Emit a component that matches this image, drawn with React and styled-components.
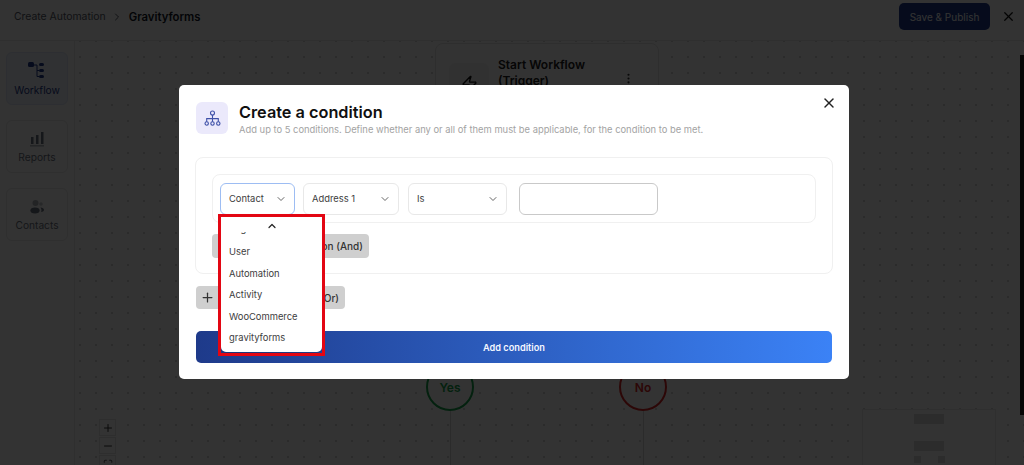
import React from 'react'
import styled, { createGlobalStyle } from 'styled-components'
import { ChevronDown, ChevronRight, ChevronUp, EllipsisVertical, Maximize, Minus, Plus, X, Zap } from 'lucide-react'

const GlobalStyle = createGlobalStyle`
  html, body { margin: 0; padding: 0; height: 100%; overflow: hidden; }
  body { font-family: Inter, "Liberation Sans", sans-serif; background: #fff; }
  * { box-sizing: border-box; }
`

const Page = styled.div`
  position: relative;
  width: 1024px;
  height: 465px;
  display: flex;
  flex-direction: column;
  overflow: hidden;
  background: #fff;
`

const TopBar = styled.header`
  height: 41px;
  flex: none;
  display: flex;
  align-items: center;
  padding: 0 8px 7px 14px;
  border-bottom: 1px solid #e8e8e8;
`

const Crumb = styled.span`
  font-size: 10.4px;
  color: #555b66;
`

const CrumbCurrent = styled.span`
  font-size: 11.3px;
  font-weight: 600;
  color: #111827;
`

const CrumbArrow = styled(ChevronRight)`
  margin: 0 6px 0 5px;
  color: #555b66;
`

const SaveButton = styled.button`
  margin-left: auto;
  width: 91px;
  height: 27px;
  border: 0;
  border-radius: 5px;
  background: #1e3a8a;
  color: #fff;
  font: 400 10px Inter, sans-serif;
`

const CloseTop = styled(X)`
  margin-left: 11px;
  color: #111;
`

const Body = styled.div`
  flex: 1;
  display: flex;
  min-height: 0;
`

const SideNav = styled.nav`
  width: 75px;
  flex: none;
  display: flex;
  flex-direction: column;
  gap: 15px;
  padding: 11px 6px;
  border-right: 1px solid #e8e8e8;
`

const NavCard = styled.div`
  height: 53px;
  display: flex;
  flex-direction: column;
  align-items: center;
  justify-content: center;
  gap: 4px;
  border: 1px solid ${p => (p.$active ? '#dfe7f7' : '#e8e8e8')};
  border-radius: 6px;
  background: ${p => (p.$active ? '#eff4ff' : '#fff')};
  color: ${p => (p.$active ? '#1e3a8a' : '#6b7280')};
  font-size: 10.2px;
`

const Canvas = styled.main`
  position: relative;
  flex: 1;
  background-image: radial-gradient(circle, #d4d4d4 0.8px, transparent 1px);
  background-size: 16px 16px;
  background-position: -3px 8px;
`

const StartNode = styled.div`
  position: absolute;
  left: 360px;
  top: 2px;
  width: 224px;
  height: 110px;
  display: flex;
  gap: 9px;
  padding: 19px 13px;
  border: 1px solid #e5e5e5;
  border-radius: 8px;
  background: #fff;
`

const NodeIcon = styled.div`
  width: 40px;
  height: 40px;
  flex: none;
  display: flex;
  align-items: center;
  justify-content: center;
  border-radius: 6px;
  background: #f5f5f5;
  color: #111;
`

const NodeTitle = styled.div`
  width: 110px;
  font-size: 12px;
  line-height: 16px;
  font-weight: 600;
  color: #222;
  margin-top: -6px;
`

const NodeMenu = styled(EllipsisVertical)`
  position: absolute;
  right: 23px;
  top: 28px;
  color: #333;
`

const Branch = styled.div`
  position: absolute;
  left: ${p => p.$left}px;
  top: 322px;
  width: 48px;
  height: 48px;
  display: flex;
  align-items: center;
  justify-content: center;
  border: 2px solid ${p => p.$color};
  border-radius: 50%;
  background: #fff;
  color: ${p => p.$color};
  font-size: 12px;
  font-weight: 600;

  &::after {
    content: '';
    position: absolute;
    left: 50%;
    top: 46px;
    width: 1px;
    height: 60px;
    background: #d4d4d4;
  }
`

const ZoomControls = styled.div`
  position: absolute;
  left: 24px;
  top: 378px;
  width: 17px;
  display: flex;
  flex-direction: column;
  gap: 1px;
`

const ZoomButton = styled.div`
  height: 17px;
  display: flex;
  align-items: center;
  justify-content: center;
  border: 1px solid #e5e5e5;
  background: #fff;
  color: #333;
`

const MiniMap = styled.div`
  position: absolute;
  left: 787px;
  top: 368px;
  width: 134px;
  height: 70px;
  display: flex;
  flex-direction: column;
  align-items: center;
  gap: 17px;
  padding-top: 4px;
  border: 1px solid #e8e8e8;
  background: #fff;
`

const MiniBar = styled.div`
  width: 30px;
  height: 10px;
  background: #dcdcdc;
`

const MiniDots = styled.div`
  width: 31px;
  display: flex;
  justify-content: space-between;
  margin-top: -12px;
`

const MiniDot = styled.div`
  width: 7px;
  height: 7px;
  background: #dcdcdc;
`

const ScrollBar = styled.div`
  position: absolute;
  right: 0;
  top: 14px;
  width: 4px;
  height: 360px;
  background: #222;
`

const Backdrop = styled.div`
  position: absolute;
  inset: 0;
  display: flex;
  align-items: center;
  justify-content: center;
  padding: 0 0 1px 4px;
  background: rgba(0, 0, 0, 0.8);
`

const Modal = styled.section`
  position: relative;
  width: 670px;
  height: 294px;
  padding: 17px 16px 16px;
  border-radius: 5px;
  background: #fff;
`

const ModalClose = styled(X)`
  position: absolute;
  right: 12px;
  top: 10px;
  color: #222;
`

const ModalHeader = styled.div`
  display: flex;
  gap: 11px;
  padding-left: 1px;
`

const ModalIcon = styled.div`
  width: 32px;
  height: 32px;
  flex: none;
  display: flex;
  align-items: center;
  justify-content: center;
  border-radius: 6px;
  background: #ebe9fb;
  color: #3f51a8;
`

const ModalHeading = styled.div`
  display: flex;
  flex-direction: column;
  gap: 1px;
`

const Title = styled.h2`
  margin: 0;
  font-size: 16.3px;
  line-height: 20px;
  font-weight: 600;
  color: #101010;
`

const Subtitle = styled.p`
  margin: 0;
  font-size: 9.4px;
  line-height: 13px;
  color: #a3a3a3;
`

const GroupBox = styled.div`
  margin-top: 21px;
  height: 117px;
  padding: 16px;
  border: 1px solid #f0f0f0;
  border-radius: 8px;
`

const RuleRow = styled.div`
  height: 49px;
  display: flex;
  align-items: center;
  padding: 0 7px;
  border: 1px solid #f0f0f0;
  border-radius: 8px;
`

const SelectWrap = styled.div`
  position: relative;
  width: ${p => p.$width}px;
  margin-right: ${p => p.$gap}px;
  flex: none;
`

const SelectBox = styled.div`
  height: 32px;
  display: flex;
  align-items: center;
  justify-content: space-between;
  padding: 0 7px 0 8px;
  border: 1px solid ${p => (p.$open ? '#9dbdf3' : '#e8e8e8')};
  border-radius: 6px;
  font-size: 9.4px;
  color: #3d3d3d;
`

const SelectChevron = styled(ChevronDown)`
  color: #666;
`

const ValueInput = styled.input`
  width: 139px;
  height: 32px;
  padding: 0 8px;
  border: 1px solid #c9c9c9;
  border-radius: 6px;
  outline: 0;
`

const Dropdown = styled.div`
  position: absolute;
  left: 1px;
  top: 32px;
  width: 101px;
  height: 137px;
  z-index: 2;
  border-radius: 0 0 5px 5px;
  background: #fff;
  box-shadow: 0 1px 3px rgba(0, 0, 0, 0.25);
`

const ScrollUp = styled(ChevronUp)`
  display: block;
  margin: 5px auto 0;
  color: #222;
`

const OptionList = styled.div`
  height: 120px;
  overflow: hidden;
  padding: 0 8px;
`

const Option = styled.div`
  height: 21.5px;
  line-height: 21.5px;
  font-size: 9.4px;
  color: #3d3d3d;
  margin-top: ${p => (p.$clipped ? '-14px' : '0')};
  margin-bottom: ${p => (p.$clipped ? '2px' : '0')};
`

const Highlight = styled.div`
  position: absolute;
  left: -2px;
  top: 31px;
  width: 107px;
  height: 142px;
  z-index: 3;
  border: 3px solid #e30613;
  pointer-events: none;
`

const GreyButton = styled.button`
  width: ${p => p.$width}px;
  height: ${p => p.$height}px;
  display: flex;
  align-items: center;
  justify-content: space-between;
  padding: 0 6px 0 4px;
  border: 0;
  border-radius: 4px;
  background: #cfcfcf;
  color: #333;
  font: 500 10px Inter, sans-serif;
`

const AndButton = styled(GreyButton)`
  margin-top: 11px;
`

const OrButton = styled(GreyButton)`
  margin: 12px 0 0 1px;
`

const AddButton = styled.button`
  display: block;
  width: 636px;
  height: 32px;
  margin: 22px 0 0 1px;
  border: 0;
  border-radius: 5px;
  background: linear-gradient(90deg, #1e3a8a, #3b82f6);
  color: #f4f7ff;
  font: 600 9.2px Inter, sans-serif;
`

const WorkflowIcon = () => (
  <svg width="20" height="18" viewBox="0 0 20 18" fill="currentColor">
    <rect x="1" y="0" width="6" height="5" rx="1.5" />
    <rect x="12" y="1" width="5" height="3" rx="1.5" />
    <rect x="12" y="7" width="5" height="3" rx="1.5" />
    <rect x="12" y="13" width="5" height="3" rx="1.5" />
    <path d="M7 3h3M10 3v11.5h2M10 8.5h2" fill="none" stroke="currentColor" />
  </svg>
)

const ReportsIcon = () => (
  <svg width="16" height="16" viewBox="0 0 16 16" fill="currentColor">
    <rect x="2" y="6" width="2.5" height="7" />
    <rect x="7" y="4" width="2.5" height="9" />
    <rect x="12" y="1" width="2.5" height="12" />
    <rect x="1" y="14.5" width="14" height="0.8" />
  </svg>
)

const ContactsIcon = () => (
  <svg width="16" height="16" viewBox="0 0 16 16" fill="currentColor">
    <circle cx="6.5" cy="4" r="3" opacity="0.55" />
    <ellipse cx="6" cy="11.5" rx="4.6" ry="3" />
    <circle cx="12" cy="5" r="1.8" opacity="0.4" />
    <path d="M11.5 8.5c2 0 3.5 1.2 3.5 2.5s-1.5 2-3 2c.8-1.5.5-3-.5-4.5z" />
  </svg>
)

const HierarchyIcon = () => (
  <svg width="17" height="17" viewBox="0 0 17 17" fill="none" stroke="currentColor" strokeWidth="1.1">
    <circle cx="8.5" cy="3" r="2" />
    <circle cx="2.7" cy="13.5" r="1.7" />
    <circle cx="8.5" cy="13.5" r="1.7" />
    <circle cx="14.3" cy="13.5" r="1.7" />
    <path d="M8.5 5v6.8M2.7 11.8V8.6h11.6v3.2" />
  </svg>
)

const options = ['Segment', 'User', 'Automation', 'Activity', 'WooCommerce', 'gravityforms']

export default function App() {
  return (
    <Page>
      <GlobalStyle />
      <TopBar>
        <Crumb>Create Automation</Crumb>
        <CrumbArrow size={12} />
        <CrumbCurrent>Gravityforms</CrumbCurrent>
        <SaveButton>Save &amp; Publish</SaveButton>
        <CloseTop size={15} />
      </TopBar>
      <Body>
        <SideNav>
          <NavCard $active>
            <WorkflowIcon />
            Workflow
          </NavCard>
          <NavCard>
            <ReportsIcon />
            Reports
          </NavCard>
          <NavCard>
            <ContactsIcon />
            Contacts
          </NavCard>
        </SideNav>
        <Canvas>
          <StartNode>
            <NodeIcon>
              <Zap size={17} />
            </NodeIcon>
            <NodeTitle>Start Workflow (Trigger)</NodeTitle>
            <NodeMenu size={13} />
          </StartNode>
          <Branch $left={351} $color="#16a34a">Yes</Branch>
          <Branch $left={544} $color="#dc2626">No</Branch>
          <ZoomControls>
            <ZoomButton><Plus size={12} /></ZoomButton>
            <ZoomButton><Minus size={12} /></ZoomButton>
            <ZoomButton><Maximize size={10} /></ZoomButton>
          </ZoomControls>
          <MiniMap>
            <MiniBar />
            <MiniBar />
            <MiniDots>
              <MiniDot />
              <MiniDot />
            </MiniDots>
          </MiniMap>
          <ScrollBar />
        </Canvas>
      </Body>
      <Backdrop>
        <Modal>
          <ModalClose size={16} strokeWidth={2.2} />
          <ModalHeader>
            <ModalIcon>
              <HierarchyIcon />
            </ModalIcon>
            <ModalHeading>
              <Title>Create a condition</Title>
              <Subtitle>
                Add up to 5 conditions. Define whether any or all of them must be applicable, for the condition to be met.
              </Subtitle>
            </ModalHeading>
          </ModalHeader>
          <GroupBox>
            <RuleRow>
              <SelectWrap $width={75} $gap={8}>
                <SelectBox $open>
                  Contact
                  <SelectChevron size={12} />
                </SelectBox>
                <Dropdown>
                  <ScrollUp size={12} strokeWidth={2.4} />
                  <OptionList>
                    {options.map((o, i) => (
                      <Option key={o} $clipped={i === 0}>{o}</Option>
                    ))}
                  </OptionList>
                </Dropdown>
                <Highlight />
              </SelectWrap>
              <SelectWrap $width={96} $gap={9}>
                <SelectBox>
                  Address 1
                  <SelectChevron size={12} />
                </SelectBox>
              </SelectWrap>
              <SelectWrap $width={99} $gap={12}>
                <SelectBox>
                  Is
                  <SelectChevron size={12} />
                </SelectBox>
              </SelectWrap>
              <ValueInput />
            </RuleRow>
            <AndButton $width={157} $height={24}>
              <Plus size={13} />
              Add condition (And)
            </AndButton>
          </GroupBox>
          <OrButton $width={149} $height={23}>
            <Plus size={15} />
            Add condition group (Or)
          </OrButton>
          <AddButton>Add condition</AddButton>
        </Modal>
      </Backdrop>
    </Page>
  )
}
